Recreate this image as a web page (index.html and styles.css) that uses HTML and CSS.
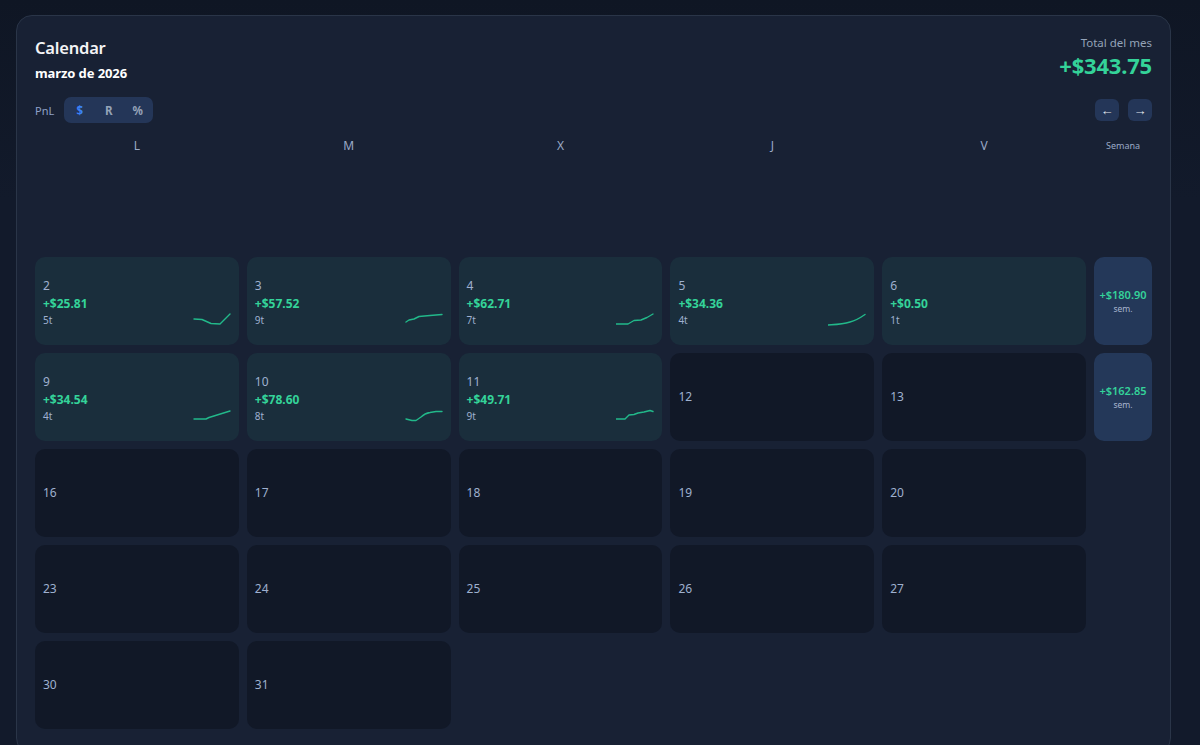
FILE: index.html
```html
<!DOCTYPE html>
<html lang="es">
<head>
<meta charset="utf-8">
<title>Calendar</title>
<link rel="stylesheet" href="styles.css">
</head>
<body>
<div class="card">
  <div class="top">
    <div class="titles">
      <h1 class="title">Calendar</h1>
      <div class="subtitle">marzo de 2026</div>
    </div>
    <div class="total">
      <div class="total-label">Total del mes</div>
      <div class="total-value">+$343.75</div>
    </div>
  </div>
  <div class="toolbar">
    <div class="mode">
      <span class="mode-label">PnL</span>
      <div class="toggle">
        <span class="tbtn active">$</span>
        <span class="tbtn">R</span>
        <span class="tbtn">%</span>
      </div>
    </div>
    <div class="nav">
      <span class="navbtn">&larr;</span>
      <span class="navbtn">&rarr;</span>
    </div>
  </div>
  <div class="grid">
    <div class="wd">L</div><div class="wd">M</div><div class="wd">X</div><div class="wd">J</div><div class="wd">V</div><div class="wd wk">Semana</div>

    <div class="blank"></div><div class="blank"></div><div class="blank"></div><div class="blank"></div><div class="blank"></div><div class="blank"></div>

    <div class="day pos"><div class="row"><div class="info"><div class="dn">2</div><div class="amt">+$25.81</div><div class="tr">5t</div></div>
      <svg class="spark" viewBox="0 0 38 14"><polyline points="1,6 9,6.5 18,10.5 27,11 37,1"/></svg></div></div>
    <div class="day pos"><div class="row"><div class="info"><div class="dn">3</div><div class="amt">+$57.52</div><div class="tr">9t</div></div>
      <svg class="spark" viewBox="0 0 38 14"><polyline points="1,9 4,7 9,6 14,3.5 25,2.5 37,1.5"/></svg></div></div>
    <div class="day pos"><div class="row"><div class="info"><div class="dn">4</div><div class="amt">+$62.71</div><div class="tr">7t</div></div>
      <svg class="spark" viewBox="0 0 38 14"><polyline points="0,11 12,11 18,7.5 25,7 31,4.5 37,1"/></svg></div></div>
    <div class="day pos"><div class="row"><div class="info"><div class="dn">5</div><div class="amt">+$34.36</div><div class="tr">4t</div></div>
      <svg class="spark" viewBox="0 0 38 14"><path d="M0,12 C8,11.5 14,11.5 22,9 C28,7.5 32,5 37,1.5"/></svg></div></div>
    <div class="day pos"><div class="row"><div class="info"><div class="dn">6</div><div class="amt">+$0.50</div><div class="tr">1t</div></div></div></div>
    <div class="week"><div class="wamt">+$180.90</div><div class="wlab">sem.</div></div>

    <div class="day pos"><div class="row"><div class="info"><div class="dn">9</div><div class="amt">+$34.54</div><div class="tr">4t</div></div>
      <svg class="spark" viewBox="0 0 38 14"><polyline points="1,10 13,10 16,8.5 37,2"/></svg></div></div>
    <div class="day pos"><div class="row"><div class="info"><div class="dn">10</div><div class="amt">+$78.60</div><div class="tr">8t</div></div>
      <svg class="spark" viewBox="0 0 38 14"><path d="M1,10 L7,11.5 L11,11.5 L16,8 C19,5 21,4 25,3.5 L31,2.5 L37,2.5"/></svg></div></div>
    <div class="day pos"><div class="row"><div class="info"><div class="dn">11</div><div class="amt">+$49.71</div><div class="tr">9t</div></div>
      <svg class="spark" viewBox="0 0 38 14"><polyline points="0,10 9,10 13,6 18,5.5 22,4 28,3 34,1.5 37,2.5"/></svg></div></div>
    <div class="day"><div class="dn">12</div></div>
    <div class="day"><div class="dn">13</div></div>
    <div class="week"><div class="wamt">+$162.85</div><div class="wlab">sem.</div></div>

    <div class="day"><div class="dn">16</div></div>
    <div class="day"><div class="dn">17</div></div>
    <div class="day"><div class="dn">18</div></div>
    <div class="day"><div class="dn">19</div></div>
    <div class="day"><div class="dn">20</div></div>
    <div class="blank"></div>

    <div class="day"><div class="dn">23</div></div>
    <div class="day"><div class="dn">24</div></div>
    <div class="day"><div class="dn">25</div></div>
    <div class="day"><div class="dn">26</div></div>
    <div class="day"><div class="dn">27</div></div>
    <div class="blank"></div>

    <div class="day"><div class="dn">30</div></div>
    <div class="day"><div class="dn">31</div></div>
    <div class="blank"></div><div class="blank"></div><div class="blank"></div><div class="blank"></div>
  </div>
</div>
</body>
</html>
```

FILE: styles.css
```css
* { box-sizing: border-box; }
html, body { background: #111827; }
body {
  margin: 0;
  padding: 15px 16px 16px 16px;
  font-family: "Noto Sans", "Open Sans", sans-serif;
  color: #e5e7eb;
  background: linear-gradient(#0f1624, #121a2b 200px);
  min-height: 100vh;
}
.card {
  width: 1155px;
  background: #182134;
  border: 1px solid #2a3548;
  border-radius: 16px;
  padding: 20px 18px 24px 18px;
}
.top { display: flex; justify-content: space-between; align-items: flex-start; }
.title { margin: 0; font-size: 16.5px; line-height: 24px; font-weight: 600; color: #f3f4f6; letter-spacing: -0.2px; }
.subtitle { margin-top: 3px; font-size: 13px; line-height: 20px; font-weight: 700; color: #ffffff; letter-spacing: -0.1px; }
.total { text-align: right; }
.total-label { font-size: 11.5px; line-height: 14px; color: #94a3b8; }
.total-value { font-size: 22px; line-height: 30px; font-weight: 700; color: #34d399; letter-spacing: -0.2px; }
.toolbar { margin-top: 14px; display: flex; justify-content: space-between; align-items: center; height: 26px; }
.mode { display: flex; align-items: center; gap: 10px; }
.mode-label { font-size: 11px; color: #8ea2c8; }
.toggle { display: flex; background: #243658; border-radius: 7px; height: 26px; padding: 0 1px; align-items: center; }
.tbtn { width: 29px; text-align: center; font-size: 11.5px; font-weight: 700; color: #94a3b8; }
.tbtn.active { color: #3b82f6; }
.nav { display: flex; gap: 9px; }
.navbtn {
  width: 24px; height: 22px; border-radius: 6px; background: #243658; color: #e5e7eb;
  display: flex; align-items: center; justify-content: center; font-size: 13px;
}
.grid {
  margin-top: 16px;
  display: grid;
  grid-template-columns: repeat(5, 1fr) 58px;
  grid-auto-rows: 88px;
  grid-template-rows: 14px;
  gap: 8px;
}
.wd { text-align: center; font-size: 12px; line-height: 14px; color: #9aa9c6; }
.wd.wk { font-size: 9px; }
.day {
  border-radius: 10px;
  background: #111827;
  padding: 0 8px;
  display: flex;
  align-items: center;
}
.day.pos { background: #1a2e3c; }
.row { width: 100%; display: flex; justify-content: space-between; align-items: flex-end; padding-top: 1px; }
.dn { font-size: 12px; line-height: 18px; color: #9fb0cf; }
.amt { font-size: 12px; line-height: 18px; font-weight: 700; color: #34d399; }
.tr { font-size: 10px; line-height: 14px; color: #9fb0cf; }
.spark { width: 38px; height: 14px; display: block; margin-bottom: 0; }
.spark polyline, .spark path { fill: none; stroke: #22b98a; stroke-width: 1.4; stroke-linejoin: round; stroke-linecap: round; }
.week {
  border-radius: 10px;
  background: #243859;
  display: flex;
  flex-direction: column;
  align-items: center;
  justify-content: center;
}
.wamt { font-size: 11px; line-height: 15px; font-weight: 600; color: #34d399; }
.wlab { font-size: 8.5px; line-height: 13px; color: #a8b5cf; }
```
